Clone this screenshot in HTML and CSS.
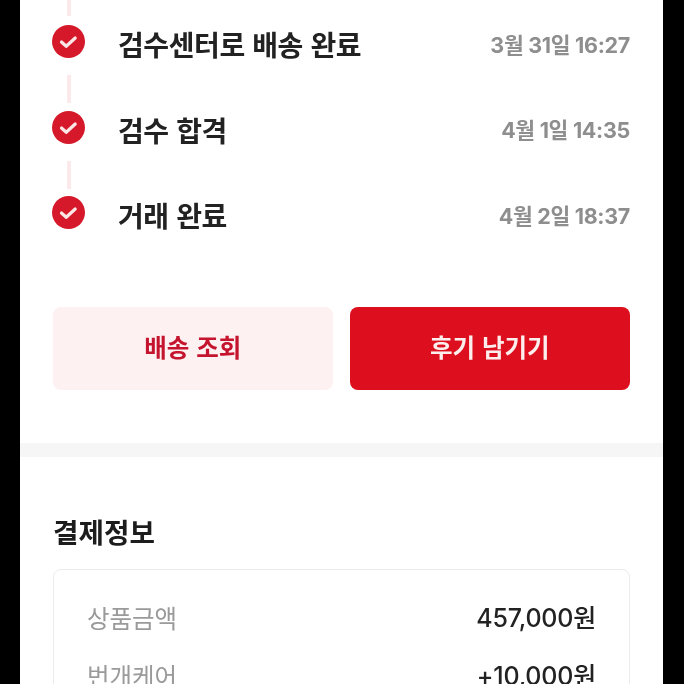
FILE: index.html
```html
<!DOCTYPE html>
<html lang="ko">
    <head>
        <meta charset="UTF-8" />
        <meta name="viewport" content="width=device-width, initial-scale=1.0" />
        <title>거래 상세</title>
        <link rel="stylesheet" href="styles.css">
    </head>
    <body>
        <main class="screen">
            <section class="order">
                <ol class="timeline">
                    <li class="connector connector-top"></li>
                    <li class="step">
                        <svg class="check" viewBox="0 0 33 33"><circle cx="16.5" cy="16.5" r="16.5"/><path d="M9.5 17l4.7 4.3 9-8.3"/></svg>
                        <span class="step-name">검수센터로 배송 완료</span>
                        <time class="step-time">3월 31일 16:27</time>
                    </li>
                    <li class="connector"></li>
                    <li class="step">
                        <svg class="check" viewBox="0 0 33 33"><circle cx="16.5" cy="16.5" r="16.5"/><path d="M9.5 17l4.7 4.3 9-8.3"/></svg>
                        <span class="step-name">검수 합격</span>
                        <time class="step-time">4월 1일 14:35</time>
                    </li>
                    <li class="connector"></li>
                    <li class="step">
                        <svg class="check" viewBox="0 0 33 33"><circle cx="16.5" cy="16.5" r="16.5"/><path d="M9.5 17l4.7 4.3 9-8.3"/></svg>
                        <span class="step-name">거래 완료</span>
                        <time class="step-time">4월 2일 18:37</time>
                    </li>
                </ol>
                <div class="actions">
                    <button class="btn btn-soft">배송 조회</button>
                    <button class="btn btn-solid">후기 남기기</button>
                </div>
            </section>
            <section class="payment">
                <h2>결제정보</h2>
                <dl class="pay-card">
                    <div class="pay-row">
                        <dt>상품금액</dt>
                        <dd>457,000원</dd>
                    </div>
                    <div class="pay-row">
                        <dt>번개케어</dt>
                        <dd>+10,000원</dd>
                    </div>
                </dl>
            </section>
        </main>
    </body>
</html>
```

FILE: styles.css
```css
html, body {
    height: 100%;
}
body {
    margin: 0;
    height: 684px;
    overflow: hidden;
    background-color: black;
    font-family: "Noto Sans CJK KR", "Noto Sans", sans-serif;
}

.screen {
    width: 643px;
    height: 684px;
    margin-left: 20px;
    overflow: hidden;
    background-color: white;
    filter: blur(0.4px);
}

.order {
    height: 443px;
    padding: 0 33px;
    border-bottom: 14px solid #f6f6f6;
    box-sizing: content-box;
}

.timeline {
    list-style: none;
    margin: 0;
    padding: 0;
}
.step {
    display: flex;
    align-items: center;
    height: 33px;
    margin-left: -1px;
}
.check {
    flex: none;
    width: 33px;
    height: 33px;
}
.check circle {
    fill: #d5182a;
}
.check path {
    fill: none;
    stroke: #fde6e6;
    stroke-width: 3.2;
    stroke-linecap: round;
    stroke-linejoin: round;
}
.step-name {
    margin-left: 33px;
    padding-top: 5px;
    font-size: 28px;
    font-weight: 700;
    letter-spacing: -0.4px;
    color: #222;
}
.step-time {
    margin-left: auto;
    padding-top: 3px;
    font-family: Inter, "Noto Sans CJK KR", sans-serif;
    font-size: 21.5px;
    font-weight: 700;
    letter-spacing: -0.3px;
    color: #8e8e8e;
}
.connector {
    width: 4px;
    height: 28px;
    margin: 17px 0 7.5px 14px;
    background-color: #fbe9ec;
}
.connector-top {
    height: 16px;
    margin-top: 0;
    margin-bottom: 9px;
}

.actions {
    display: flex;
    gap: 17px;
    margin-top: 78px;
}
.btn {
    height: 83px;
    padding: 0 0 4px;
    border: 0;
    border-radius: 8px;
    font-family: inherit;
    font-size: 24.5px;
    font-weight: 700;
}
.btn-soft {
    width: 280px;
    background-color: #fef1f1;
    color: #c4142e;
}
.btn-solid {
    width: 281px;
    background-color: #dd0f1e;
    color: #fdeeee;
}

.payment {
    padding: 0 33px;
}
.payment h2 {
    margin: 54px 0 18px;
    font-size: 27.7px;
    line-height: 40px;
    font-weight: 700;
    color: #1c1c1c;
}
.pay-card {
    margin: 0;
    padding: 25px 33px 26px 33px;
    border: 1.5px solid #ececec;
    border-radius: 8px;
}
.pay-row {
    display: flex;
    justify-content: space-between;
    align-items: center;
    height: 44px;
    margin-bottom: 14px;
    font-size: 24.5px;
}
.pay-row dt {
    color: #9a9a9a;
}
.pay-row dd {
    margin: 0;
    padding-bottom: 2px;
    font-family: Inter, "Noto Sans CJK KR", sans-serif;
    font-size: 25px;
    font-weight: 500;
    letter-spacing: -0.2px;
    color: #222;
}
```
